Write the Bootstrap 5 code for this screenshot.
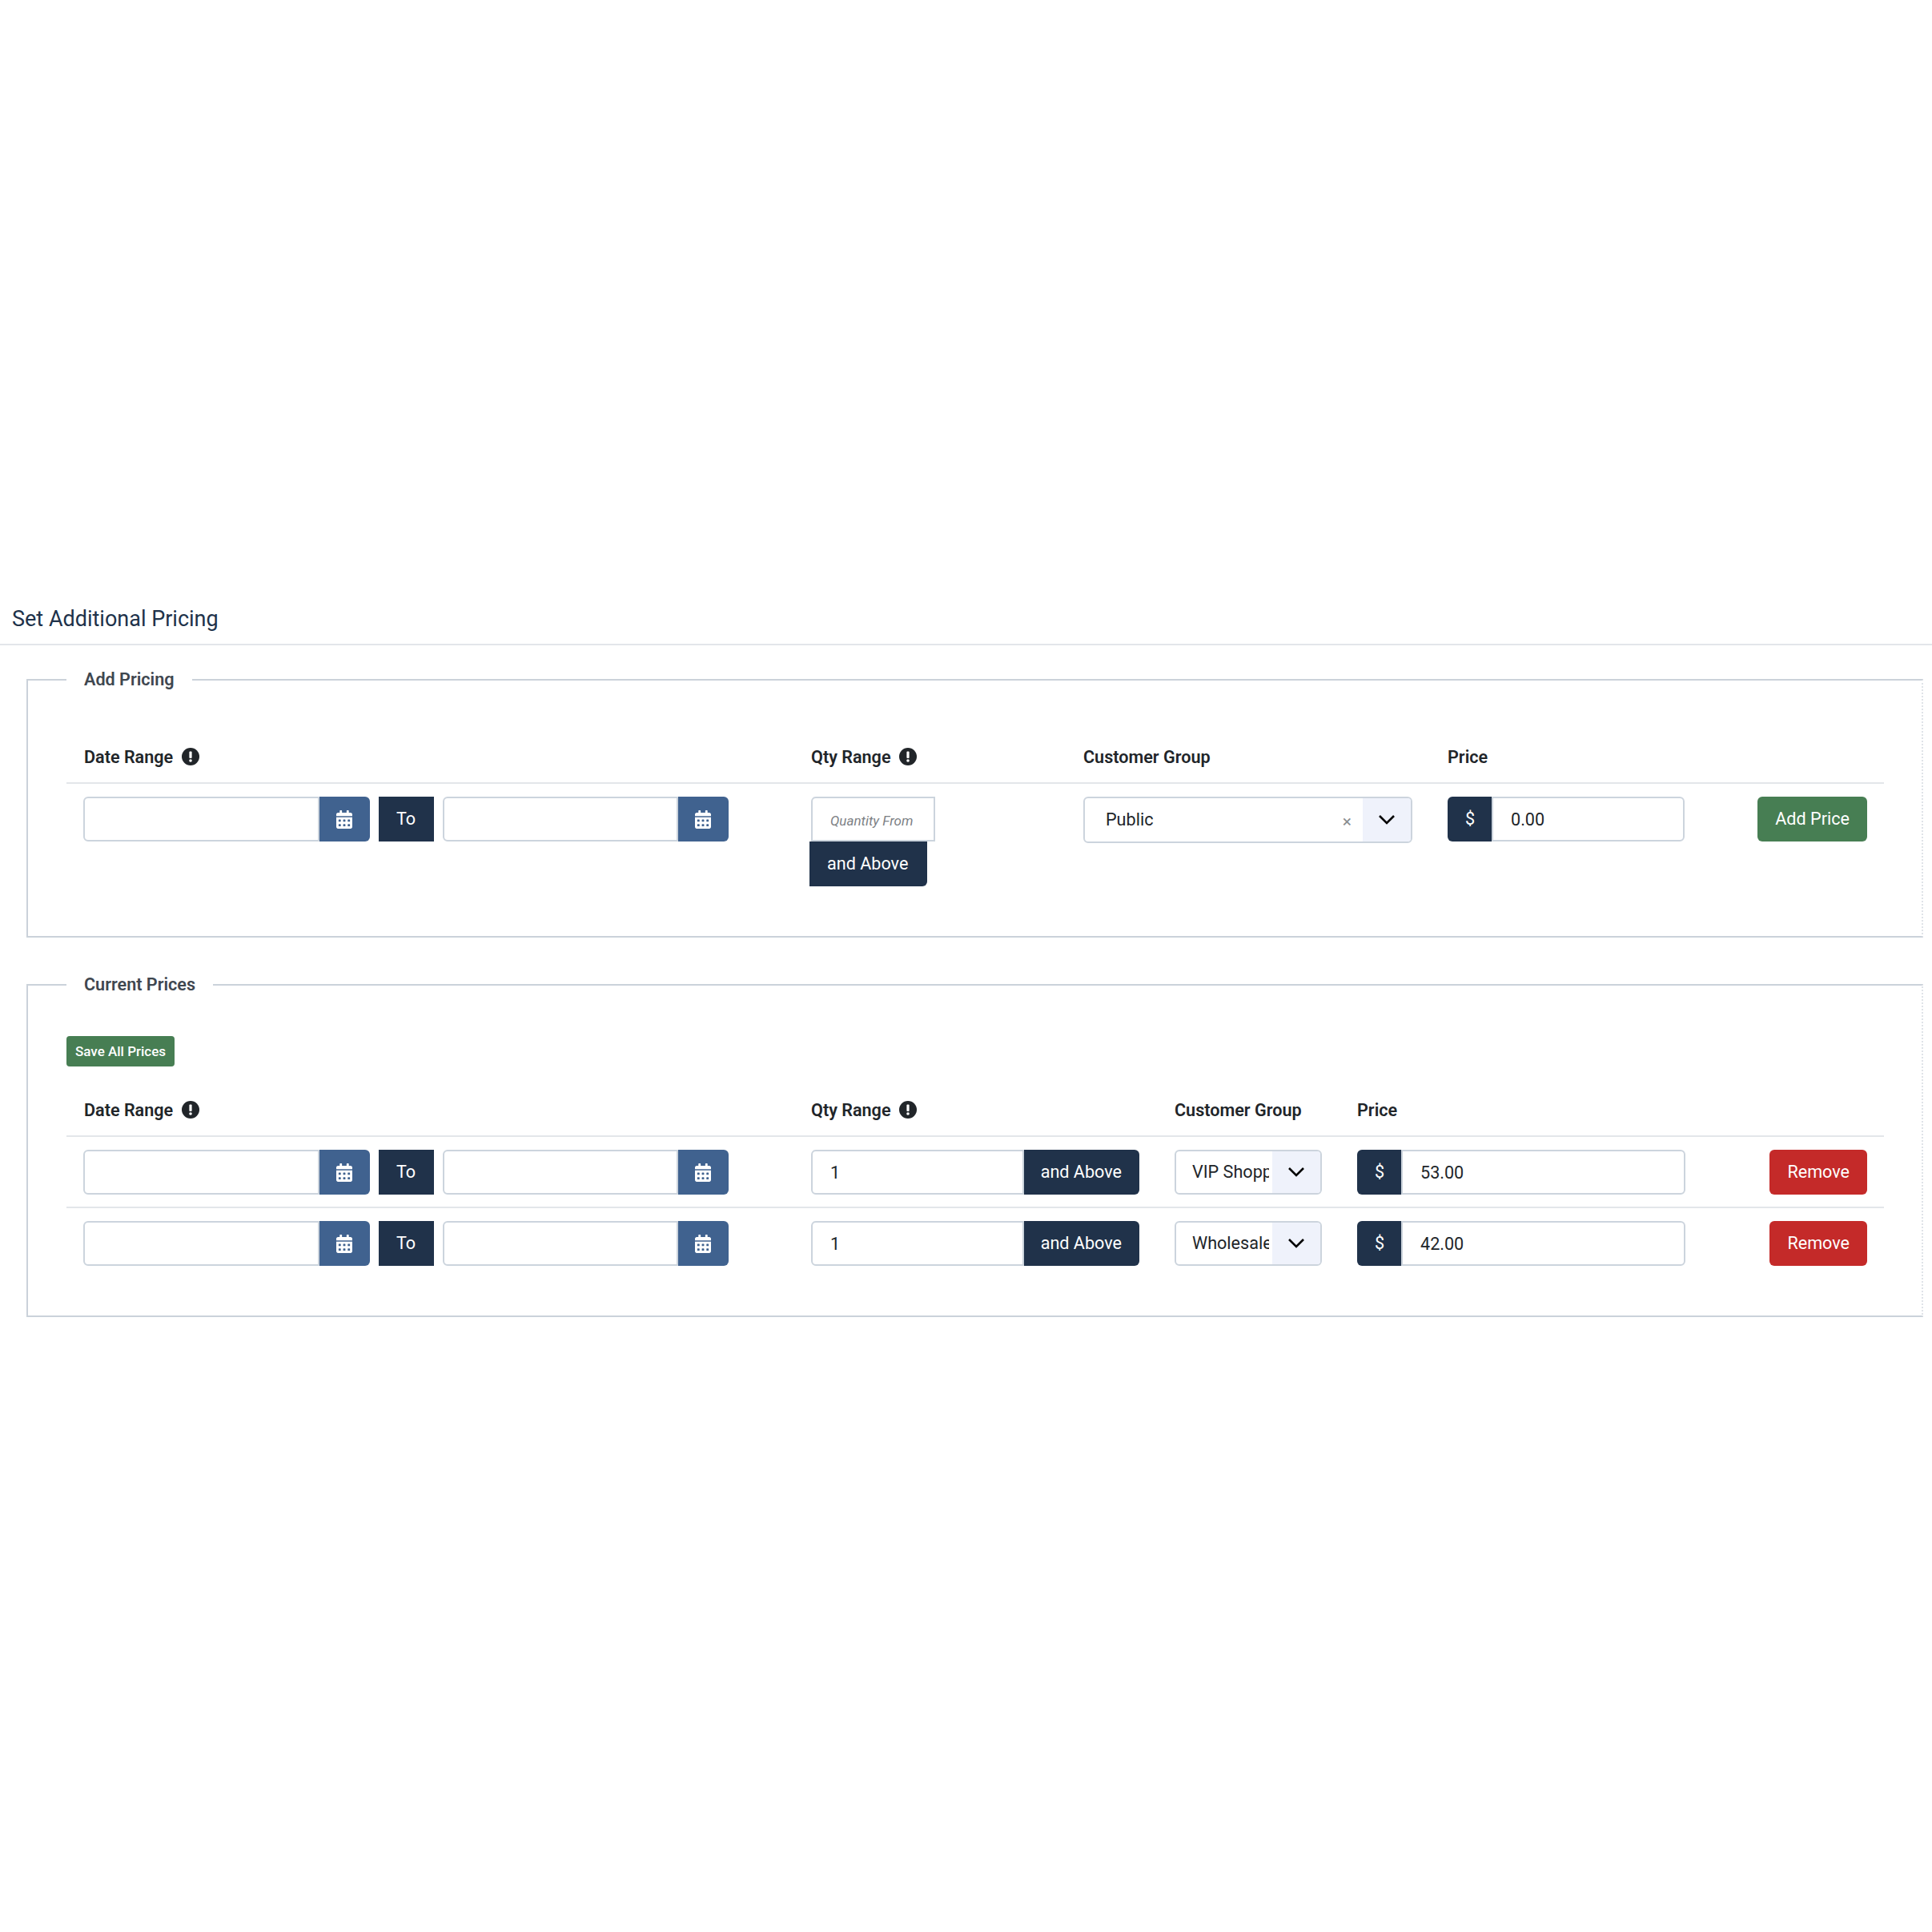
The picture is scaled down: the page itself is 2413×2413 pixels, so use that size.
<!DOCTYPE html>
<html lang="en">
<head>
<meta charset="utf-8">
<title>Set Additional Pricing</title>
<link href="https://cdn.jsdelivr.net/npm/bootstrap@5.3.0/dist/css/bootstrap.min.css" rel="stylesheet">
<style>
body{font-family:Roboto,"Liberation Sans",sans-serif;font-size:21.6px;color:#212529;background:#fff;line-height:1.5}
.page-pad{padding-top:750px;padding-bottom:760px}
.sheet-title{font-size:27px;font-weight:400;line-height:46px;color:#20324a;margin:0;padding:0 15px 8px;border-bottom:2px solid #e3e6ea}
.price-set{display:block;min-width:0;margin:27px 11px 43px 33px;padding:0 0 47px 48px;border:2px solid #cbd2da;border-right:2px dotted #dfe3e8}
.price-set+.price-set{margin-bottom:0}
.price-set>legend{float:none;width:auto;font-size:21.6px;font-weight:600;line-height:32px;color:#3f4750;margin:0;padding:0 22px}
.grid-tbl{table-layout:fixed;width:2270px;margin:65px 0 0;border-collapse:collapse}
.grid-tbl.after-save{margin-top:39px}
.grid-tbl th{font-weight:600;line-height:32px;padding:0 22px 15px;color:#212529;white-space:nowrap}
.grid-tbl td{padding:16px 22px 15px;vertical-align:top;border-top:2px solid #e3e6ea}
.grid-tbl .last-col{text-align:right;padding-right:21px}
.hint-ico{width:22px;height:22px;margin-left:5px;vertical-align:-3px;display:inline-block}
.date-pair{width:806px;margin-left:-1px}
.fld{height:56px;font-size:21.6px;padding:0 22px;border:2px solid #ccd4dd;border-radius:6px;color:#212529;background:#fff;box-shadow:none}
.fld::placeholder{font-size:17px;font-style:italic;color:#7d8185}
.cal-btn{width:64px;height:56px;padding:0;border:0;border-radius:0 6px 6px 0;background:#40628f;color:#fff;display:flex;align-items:center;justify-content:center}
.cal-btn svg{width:20px;height:23px;fill:#fff}
.to-tag{width:69px;height:56px;flex:none;background:#20324a;color:#fff;display:flex;align-items:center;justify-content:center;margin:0 11px}
.navy-btn{height:56px;padding:0 22px;border:0;background:#20324a;color:#fff;font-size:21.6px;border-radius:0 6px 6px 0;white-space:nowrap;line-height:56px}
.qty-free{width:155px;border-radius:6px 0 0 0}
.qty-stack{width:147px;margin-left:-2px;border-radius:0 0 6px 0;display:block}
.cust-box{display:flex;height:56px;border:2px solid #ccd4dd;border-radius:6px;overflow:hidden;background:#fff}
.cust-box.tall{height:58px}
.cust-val{flex:1 1 0;min-width:0;padding-left:20px;line-height:52px;white-space:nowrap;overflow:hidden;margin-right:4px}
.cust-box.tall .cust-val{padding-left:26px;line-height:54px;margin-right:0;display:flex;justify-content:space-between}
.clear-x{color:#8a8d90;font-size:21px;padding-right:14px;padding-top:2px}
.cust-arrow{width:60px;flex:none;background:#eff2fb;display:flex;align-items:center;justify-content:center}
.cust-arrow svg{width:22px;height:14px;stroke:#000;stroke-width:2.6;fill:none}
.dollar{width:56px;height:56px;padding:0;justify-content:center;border:0;background:#20324a;color:#fff;font-size:21.6px;border-radius:6px 0 0 6px}
.act-btn{height:56px;padding:0 22px;border:0;border-radius:6px;font-size:21.6px;color:#fff;line-height:56px}
.act-green{background:#477e53}
.act-red{background:#c42a29}
.save-btn{display:block;margin-top:48px;height:38px;padding:0 11px;border:0;border-radius:4px;background:#477e53;color:#fff;font-size:17px;font-weight:500;line-height:38px}
</style>
</head>
<body>
<svg width="0" height="0" class="d-block position-absolute">
<symbol id="cal" viewBox="0 0 448 512"><path d="M0 464c0 26.5 21.5 48 48 48h352c26.5 0 48-21.5 48-48V192H0v272zm320-196c0-6.6 5.4-12 12-12h40c6.6 0 12 5.4 12 12v40c0 6.6-5.4 12-12 12h-40c-6.6 0-12-5.4-12-12v-40zm0 128c0-6.6 5.4-12 12-12h40c6.6 0 12 5.4 12 12v40c0 6.6-5.4 12-12 12h-40c-6.6 0-12-5.4-12-12v-40zM192 268c0-6.6 5.4-12 12-12h40c6.6 0 12 5.4 12 12v40c0 6.6-5.4 12-12 12h-40c-6.6 0-12-5.4-12-12v-40zm0 128c0-6.6 5.4-12 12-12h40c6.6 0 12 5.4 12 12v40c0 6.6-5.4 12-12 12h-40c-6.6 0-12-5.4-12-12v-40zM64 268c0-6.6 5.4-12 12-12h40c6.6 0 12 5.4 12 12v40c0 6.6-5.4 12-12 12H76c-6.6 0-12-5.4-12-12v-40zm0 128c0-6.6 5.4-12 12-12h40c6.6 0 12 5.4 12 12v40c0 6.6-5.4 12-12 12H76c-6.6 0-12-5.4-12-12v-40zM400 64h-48V16c0-8.8-7.2-16-16-16h-32c-8.8 0-16 7.2-16 16v48H160V16c0-8.8-7.2-16-16-16h-32c-8.8 0-16 7.2-16 16v48H48C21.5 64 0 85.5 0 112v48h448v-48c0-26.5-21.5-48-48-48z"/></symbol>
<symbol id="hint" viewBox="0 0 22 22"><circle cx="11" cy="11" r="11" fill="#212529"/><rect x="9.4" y="4.5" width="3.2" height="8.5" rx="1" fill="#fff"/><circle cx="11" cy="16" r="1.8" fill="#fff"/></symbol>
<symbol id="chev" viewBox="0 0 22 14"><path d="M2 2l9 9 9-9"/></symbol>
</svg>

<div class="page-pad">
  <h1 class="sheet-title">Set Additional Pricing</h1>

  <fieldset class="price-set">
    <legend>Add Pricing</legend>
    <table class="grid-tbl">
      <colgroup><col style="width:908px"><col style="width:340px"><col style="width:455px"><col style="width:340px"><col style="width:227px"></colgroup>
      <thead><tr>
        <th>Date Range <svg class="hint-ico"><use href="#hint"/></svg></th>
        <th>Qty Range <svg class="hint-ico"><use href="#hint"/></svg></th>
        <th>Customer Group</th>
        <th>Price</th>
        <th></th>
      </tr></thead>
      <tbody><tr>
        <td>
          <div class="d-flex date-pair">
            <div class="input-group flex-nowrap"><input class="form-control fld" type="text"><span class="cal-btn"><svg><use href="#cal"/></svg></span></div>
            <span class="to-tag">To</span>
            <div class="input-group flex-nowrap"><input class="form-control fld" type="text"><span class="cal-btn"><svg><use href="#cal"/></svg></span></div>
          </div>
        </td>
        <td>
          <input class="form-control fld qty-free" type="text" placeholder="Quantity From">
          <span class="navy-btn qty-stack">and Above</span>
        </td>
        <td>
          <div class="cust-box tall"><span class="cust-val"><span>Public</span><span class="clear-x">×</span></span><span class="cust-arrow"><svg><use href="#chev"/></svg></span></div>
        </td>
        <td>
          <div class="input-group flex-nowrap"><span class="input-group-text dollar">$</span><input class="form-control fld" type="text" value="0.00"></div>
        </td>
        <td class="last-col"><button class="act-btn act-green" type="button">Add Price</button></td>
      </tr></tbody>
    </table>
  </fieldset>

  <fieldset class="price-set">
    <legend>Current Prices</legend>
    <button class="save-btn" type="button">Save All Prices</button>
    <table class="grid-tbl after-save">
      <colgroup><col style="width:908px"><col style="width:454px"><col style="width:228px"><col style="width:454px"><col style="width:226px"></colgroup>
      <thead><tr>
        <th>Date Range <svg class="hint-ico"><use href="#hint"/></svg></th>
        <th>Qty Range <svg class="hint-ico"><use href="#hint"/></svg></th>
        <th>Customer Group</th>
        <th>Price</th>
        <th></th>
      </tr></thead>
      <tbody>
      <tr>
        <td>
          <div class="d-flex date-pair">
            <div class="input-group flex-nowrap"><input class="form-control fld" type="text"><span class="cal-btn"><svg><use href="#cal"/></svg></span></div>
            <span class="to-tag">To</span>
            <div class="input-group flex-nowrap"><input class="form-control fld" type="text"><span class="cal-btn"><svg><use href="#cal"/></svg></span></div>
          </div>
        </td>
        <td><div class="input-group flex-nowrap"><input class="form-control fld" type="text" value="1"><span class="navy-btn">and Above</span></div></td>
        <td><div class="cust-box"><span class="cust-val">VIP Shopper</span><span class="cust-arrow"><svg><use href="#chev"/></svg></span></div></td>
        <td><div class="input-group flex-nowrap"><span class="input-group-text dollar">$</span><input class="form-control fld" type="text" value="53.00"></div></td>
        <td class="last-col"><button class="act-btn act-red" type="button">Remove</button></td>
      </tr>
      <tr>
        <td>
          <div class="d-flex date-pair">
            <div class="input-group flex-nowrap"><input class="form-control fld" type="text"><span class="cal-btn"><svg><use href="#cal"/></svg></span></div>
            <span class="to-tag">To</span>
            <div class="input-group flex-nowrap"><input class="form-control fld" type="text"><span class="cal-btn"><svg><use href="#cal"/></svg></span></div>
          </div>
        </td>
        <td><div class="input-group flex-nowrap"><input class="form-control fld" type="text" value="1"><span class="navy-btn">and Above</span></div></td>
        <td><div class="cust-box"><span class="cust-val">Wholesale</span><span class="cust-arrow"><svg><use href="#chev"/></svg></span></div></td>
        <td><div class="input-group flex-nowrap"><span class="input-group-text dollar">$</span><input class="form-control fld" type="text" value="42.00"></div></td>
        <td class="last-col"><button class="act-btn act-red" type="button">Remove</button></td>
      </tr>
      </tbody>
    </table>
  </fieldset>
</div>
<script src="https://cdn.jsdelivr.net/npm/bootstrap@5.3.0/dist/js/bootstrap.bundle.min.js"></script>
</body>
</html>
